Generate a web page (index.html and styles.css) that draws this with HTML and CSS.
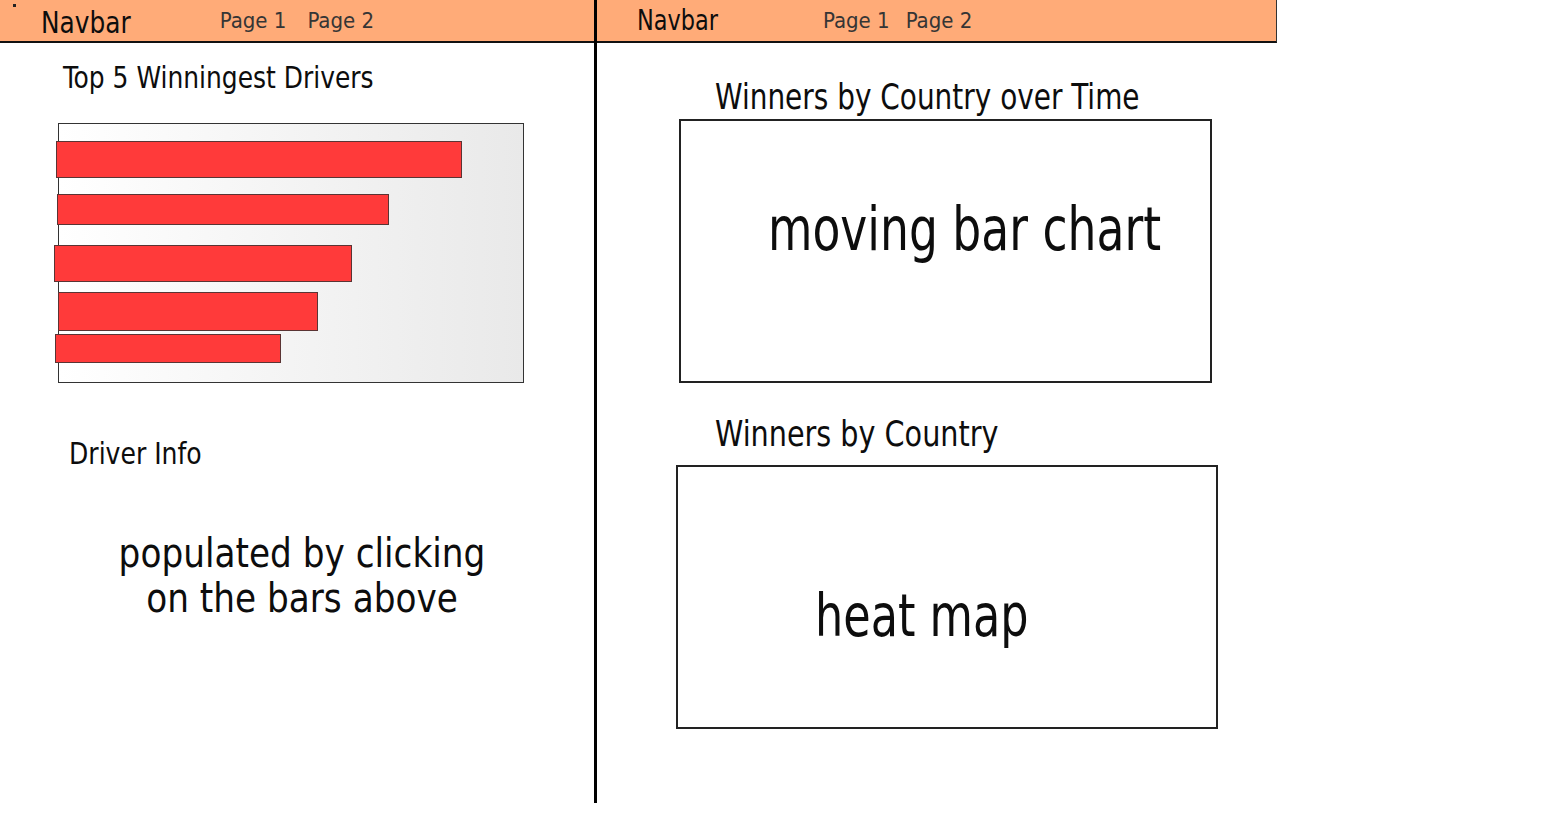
FILE: index.html
```html
<!DOCTYPE html>
<html lang="en">
<head>
<meta charset="utf-8">
<title>Wireframe</title>
<link rel="stylesheet" href="styles.css">
</head>
<body>
<div class="page">
  <section class="pane pane-left">
    <header class="navbar navbar-left">
      <span class="speck"></span>
      <span class="brand">Navbar</span>
      <nav class="links links-left"><span>Page 1</span><span>Page 2</span></nav>
    </header>
    <h2 class="title title-top5">Top 5 Winningest Drivers</h2>
    <div class="chart">
      <div class="bar b1" style="width:406px"></div>
      <div class="bar b2" style="width:332px"></div>
      <div class="bar b3" style="width:298px"></div>
      <div class="bar b4" style="width:260px"></div>
      <div class="bar b5" style="width:226px"></div>
    </div>
    <h2 class="title title-driver">Driver Info</h2>
    <p class="placeholder">populated by clicking<br>on the bars above</p>
  </section>
  <div class="divider"></div>
  <section class="pane pane-right">
    <header class="navbar navbar-right">
      <span class="brand brand-small">Navbar</span>
      <nav class="links links-right"><span>Page 1</span><span>Page 2</span></nav>
    </header>
    <h2 class="title title-over-time">Winners by Country over Time</h2>
    <div class="frame frame-moving"><span class="frame-label label-moving">moving bar chart</span></div>
    <h2 class="title title-country">Winners by Country</h2>
    <div class="frame frame-heat"><span class="frame-label label-heat">heat map</span></div>
  </section>
</div>
</body>
</html>
```

FILE: styles.css
```css
* { box-sizing: border-box; }
html, body { margin: 0; padding: 0; background: #fff; }
body {
  font-family: "DejaVu Sans Condensed", "Liberation Sans", sans-serif;
  color: #0d0d0d;
}
.page {
  display: flex;
  align-items: flex-start;
  width: 1554px;
  height: 820px;
}
.pane { display: flex; flex-direction: column; }
.pane-left { width: 594px; }
.pane-right { width: 680px; }
.divider {
  width: 3px;
  height: 803px;
  background: #000;
  flex: none;
}
.navbar {
  position: relative;
  display: flex;
  align-items: center;
  height: 43px;
  background: #ffab78;
  border-bottom: 2px solid #111;
}
.navbar-left { padding-left: 41px; }
.navbar-right { padding-left: 40px; border-right: 1px solid #333; }
.speck {
  position: absolute;
  left: 13px;
  top: 4px;
  width: 3px;
  height: 3px;
  background: #222;
}
.brand {
  font-size: 31px;
  line-height: 1;
  padding-top: 3px;
  transform: scaleX(0.89);
  transform-origin: left center;
}
.brand-small { font-size: 28px; padding-top: 0; }
.links { display: flex; font-size: 22px; line-height: 1; color: #353535; }
.links-left { margin-left: 78px; gap: 21px; }
.links-right { margin-left: 95px; gap: 16px; }
.title {
  margin: 0;
  font-weight: normal;
  line-height: 1;
  white-space: nowrap;
  transform-origin: left top;
}
.title-top5 { font-size: 30px; margin: 20px 0 0 63px; transform: scaleX(0.925); }
.chart {
  display: flex;
  flex-direction: column;
  align-items: flex-start;
  margin: 30px 0 0 58px;
  width: 466px;
  height: 260px;
  border: 1px solid #333;
  background: linear-gradient(to right, #ffffff, #e9e9e9);
  padding-top: 17px;
}
.bar {
  background: #ff3a3a;
  border: 1px solid #5a3434;
  flex: none;
}
.b1 { height: 37px; margin-left: -3px; }
.b2 { height: 31px; margin-left: -2px; margin-top: 16px; }
.b3 { height: 37px; margin-left: -5px; margin-top: 20px; }
.b4 { height: 39px; margin-left: -1px; margin-top: 10px; }
.b5 { height: 29px; margin-left: -4px; margin-top: 3px; }
.title-driver { font-size: 31px; margin: 55px 0 0 69px; transform: scaleX(0.9); }
.placeholder {
  margin: 62px 0 0 10px;
  font-size: 41px;
  line-height: 45px;
  text-align: center;
  transform: scaleX(0.93);
  transform-origin: 292px 0;
}
.title-over-time { font-size: 35px; margin: 37px 0 0 118px; transform: scaleX(0.887); }
.frame {
  border: 2px solid #222;
  height: 264px;
  display: flex;
  align-items: flex-start;
  flex: none;
}
.frame-moving { margin: 4px 0 0 82px; width: 533px; padding: 78px 0 0 87px; }
.title-country { font-size: 35px; margin: 34px 0 0 118px; transform: scaleX(0.91); }
.frame-heat { margin: 13px 0 0 79px; width: 542px; height: 264px; padding: 120px 0 0 137px; }
.frame-label {
  line-height: 1;
  white-space: nowrap;
  transform-origin: left top;
}
.label-moving { font-size: 60px; transform: scaleX(0.845); }
.label-heat { font-size: 58px; transform: scaleX(0.854); }
```
